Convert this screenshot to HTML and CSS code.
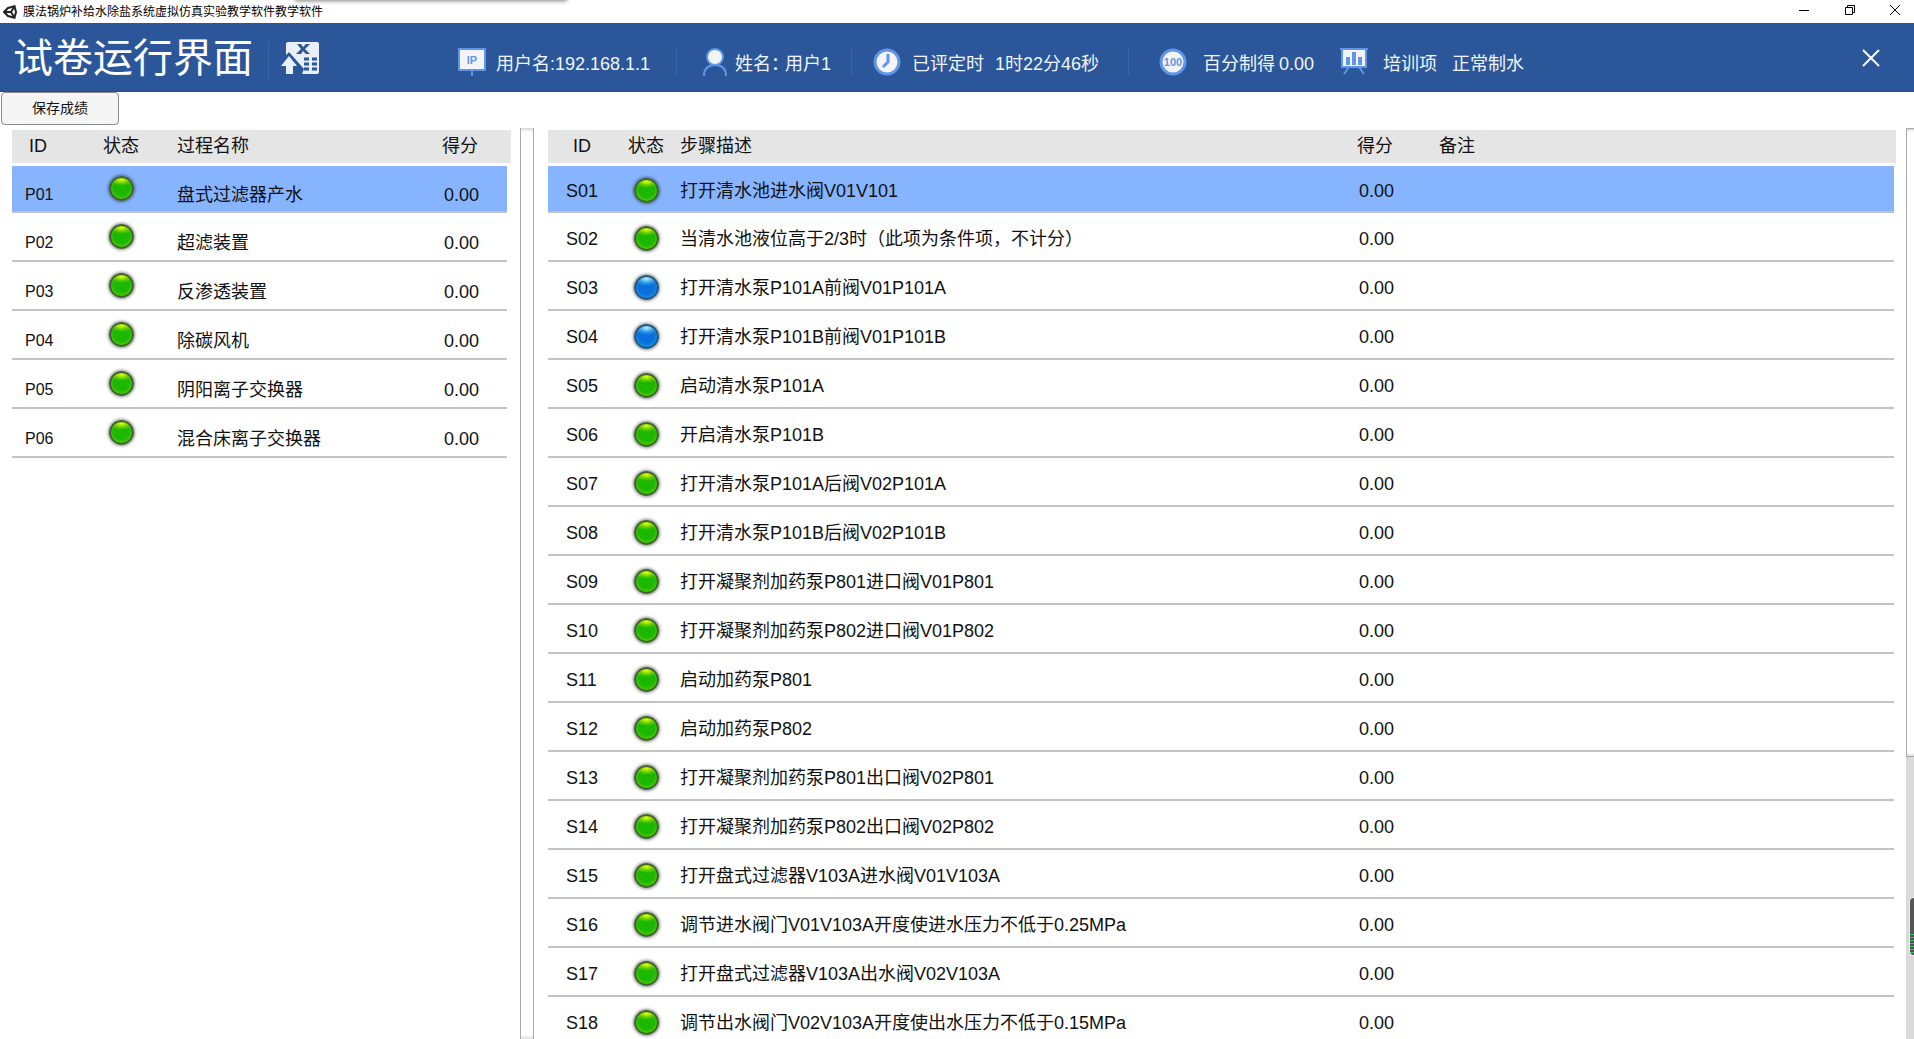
FILE: index.html
```html
<!DOCTYPE html>
<html lang="zh-CN">
<head>
<meta charset="utf-8">
<title>膜法锅炉补给水除盐系统虚拟仿真实验教学软件教学软件</title>
<link rel="stylesheet" href="styles.css">
</head>
<body>
<div class="titlebar">
  <svg class="app-icon" viewBox="0 0 14 14" aria-hidden="true"><path d="M1 7L5 3L11.500 1.200L13 7L11.500 12.800L5 11Z" fill="none" stroke="#222" stroke-width="2"/><path d="M1 7H8M8 7L11.500 1.500M8 7L11.500 12.500" stroke="#222" stroke-width="2" fill="none"/></svg>
  <span class="app-name">膜法锅炉补给水除盐系统虚拟仿真实验教学软件教学软件</span>
  <div class="window-controls">
    <button aria-label="最小化"><svg viewBox="0 0 10 10"><path d="M0 5.500H10"/></svg></button>
    <button aria-label="还原"><svg viewBox="0 0 10 10"><path d="M.5 2.500H7.500V9.500H.5ZM2.500 2.500V.5H9.500V7.500H7.500"/></svg></button>
    <button aria-label="关闭窗口"><svg viewBox="0 0 10 10"><path d="M0 0L10 10M10 0L0 10"/></svg></button>
  </div>
</div>
<header class="header">
  <h1>试卷运行界面</h1>
  <svg class="export" viewBox="0 0 38 32" aria-hidden="true"><path d="M7 0H36Q38 0 38 2V30Q38 32 36 32H21L5 12V2Q5 0 7 0Z" fill="#e9eff7"/><path d="M16 2H20L22 5L25 2H29L24 7L29 12H25L22 9L20 12H15L20 7Z" fill="#2b579a"/><path d="M8 10L23 27L21 32H14V25H0L0 19Z" fill="#2b579a"/><path d="M8 14L16 24H12V32H5V24H0Z" fill="#e9eff7"/><path d="M23 17H28M31 17H36M23 22H28M31 22H36M23 27H28M31 27H36" stroke="#2b579a" stroke-width="3"/></svg>
  <ul class="facts">
    <li class="fact fact-ip"><svg viewBox="0 0 28 28"><path d="M1 1H27V22H1Z" fill="#f4f4f6" stroke="#5f96ea" stroke-width="2"/><path d="M13 22H15V28H13Z" fill="#5f96ea"/><text x="14" y="16" text-anchor="middle">IP</text></svg><span>用户名:192.168.1.1</span></li>
    <li class="fact fact-user"><svg viewBox="0 0 28 28"><path d="M4 28Q4 17 15 17Q26 17 26 28" fill="none" stroke="#5f96ea" stroke-width="2"/><circle cx="15" cy="9" r="8" fill="#f4f4f6" stroke="#5f96ea" stroke-width="2"/></svg><span class="fact-label">姓名：</span><span>用户1</span></li>
    <li class="fact fact-time"><svg viewBox="0 0 28 28"><circle cx="14" cy="14" r="12" fill="#f4f4f6" stroke="#5f96ea" stroke-width="3"/><path d="M15 6V14L10 19" fill="none" stroke="#5f96ea" stroke-width="3"/></svg><span>已评定时</span><span>1时22分46秒</span></li>
    <li class="fact fact-score"><svg viewBox="0 0 28 28"><circle cx="14" cy="14" r="12" fill="#f4f4f6" stroke="#5f96ea" stroke-width="3"/><text x="14" y="18" text-anchor="middle">100</text></svg><span>百分制得</span><span>0.00</span></li>
    <li class="fact fact-item"><svg viewBox="0 0 28 28"><path d="M2 1H26V19H2Z" fill="#f4f4f6"/><path d="M0 1H28M2 1V19H26V1M9 19L4 26M19 19L24 26" fill="none" stroke="#5f96ea" stroke-width="2"/><path d="M6 9H10V17H6ZM12 4H16V17H12ZM18 9H22V17H18Z" fill="#5f96ea"/></svg><span>培训项</span><span>正常制水</span></li>
  </ul>
  <button class="close" aria-label="关闭"><svg viewBox="0 0 18 18"><path d="M1 1L17 17M17 1L1 17"/></svg></button>
</header>
<div class="toolbar"><button class="save">保存成绩</button></div>
<main class="workspace">
  <section class="processes">
    <table>
      <colgroup><col class="c-id"><col class="c-state"><col><col class="c-score"></colgroup>
      <thead><tr><th>ID</th><th>状态</th><th>过程名称</th><th>得分</th></tr></thead>
      <tbody id="process-rows"></tbody>
    </table>
  </section>
  <div class="divider-bar"></div>
  <section class="steps">
    <table>
      <colgroup><col class="c-id"><col class="c-state"><col class="c-desc"><col class="c-score"><col></colgroup>
      <thead><tr><th>ID</th><th>状态</th><th>步骤描述</th><th>得分</th><th>备注</th></tr></thead>
      <tbody id="step-rows"></tbody>
    </table>
  </section>
  <div class="scroll-track"><div class="scroll-thumb"></div><div class="meter"></div></div>
</main>
<script src="script.js"></script>
</body>
</html>
```
FILE: styles.css
```css
* { box-sizing: border-box; }
body {
  margin: 0;
  height: 100vh;
  display: flex;
  flex-direction: column;
  overflow: hidden;
  background: #fff;
  color: #111;
  font: 18px/24px "Liberation Sans", "Noto Sans CJK SC", sans-serif;
}
button { margin: 0; padding: 0; border: 0; background: none; font: inherit; color: inherit; }
svg { display: block; flex: none; }

.titlebar {
  position: relative;
  flex: none;
  height: 23px;
  display: flex;
  align-items: center;
  gap: 6px;
  padding: 0 3px;
  color: #000;
  font-size: 12px;
  line-height: 20px;
}
.titlebar::before {
  content: "";
  position: absolute;
  left: 296px;
  top: -6px;
  width: 270px;
  height: 6px;
  box-shadow: 0 0 4px 1px rgba(0, 0, 0, .5);
}
.app-icon { width: 14px; height: 14px; }
.window-controls { display: flex; height: 100%; margin-left: auto; }
.window-controls button { width: 46px; display: flex; justify-content: center; align-items: center; padding-bottom: 3px; }
.window-controls button:last-child { width: 38px; justify-content: flex-end; padding-right: 11px; }
.window-controls svg { width: 10px; height: 10px; overflow: visible; fill: none; stroke: #000; }

.header {
  flex: none;
  height: 69px;
  display: flex;
  background: #2b579a;
  border-bottom: 1px solid #244c8b;
  color: #f1f5fb;
}
h1 { margin: 0 0 0 13px; width: 256px; padding-top: 6px; border-right: 1px solid #3565aa; border-image: linear-gradient(transparent 18px, #3565aa 18px 56px, transparent 56px) 1; font-size: 40px; line-height: 58px; font-weight: 400; color: #fff; }
.export { width: 38px; height: 32px; margin: 19px 0 0 12px; }
.facts { display: flex; margin: 0; padding: 25px 0 0; list-style: none; }
.fact { display: flex; height: 28px; white-space: nowrap; }
.fact svg { width: 28px; height: 28px; }
.fact span { padding-top: 4px; }
.fact text { fill: #5f96ea; font-weight: 700; font-size: 11px; }
.fact-ip { margin-left: 139px; width: 219px; gap: 10px; }
.fact-user { width: 175px; padding-left: 23px; gap: 7px; }
.fact-label { width: 43px; }
.fact-time { width: 277px; padding-left: 21px; gap: 11px; }
.fact-score { width: 211px; padding-left: 30px; gap: 4px; }
.fact-score svg { margin-right: 12px; }
.fact-item { gap: 15px; }
.fact-ip, .fact-user, .fact-time { border-right: 1px solid #3565aa; }
.close { width: 86px; margin-left: auto; display: flex; justify-content: center; align-items: center; padding-top: 1px; }
.close svg { width: 18px; height: 18px; stroke: #fff; stroke-width: 2; }

.toolbar { flex: none; height: 36px; padding: 0 1px; display: flex; }
.save {
  width: 118px;
  height: 33px;
  padding-bottom: 2px;
  border: 1px solid #8d8d8d;
  border-radius: 4px;
  background: #f5f5f5;
  font-size: 14px;
}

.workspace { flex: 1; min-height: 0; display: flex; }
.processes { width: 520px; padding: 2px 13px 0 12px; }
.steps { flex: 1; padding: 2px 12px 0 14px; }
table { width: 100%; table-layout: fixed; border-collapse: separate; border-spacing: 0; }
th, td { padding: 0; text-align: left; font-weight: 400; white-space: nowrap; }
th { height: 33px; padding-bottom: 2px; background: #e5e5e5; }
th:last-child { box-shadow: 4px 0 #e5e5e5; }
.steps th:last-child { box-shadow: 2px 0 #e5e5e5; }
td { height: 49px; padding-top: 4px; border-bottom: 2px solid #c3c3c3; }
tbody::before { content: ""; display: table-row; height: 3px; }
tbody tr:first-child td { height: 47px; background: #87b4ff; background-clip: padding-box; }
th:nth-child(2), td:nth-child(2) { text-align: center; }

.processes .c-id { width: 74px; }
.processes .c-state { width: 70px; }
.processes td:nth-child(3), .processes th:nth-child(3) { padding-left: 21px; }
.processes .c-score { width: 65px; }
.processes th:first-child { padding-left: 17px; }
.processes td { padding-top: 12px; }
.processes td:first-child { padding-left: 13px; font-size: 16px; }
.processes td:nth-child(2) { padding: 0; }
.processes td:last-child { padding-left: 2px; }

.steps .c-id { width: 64px; }
.steps .c-state { width: 68px; }
.steps .c-desc { width: 677px; }
.steps .c-score { width: 82px; }
.steps td:first-child { padding-left: 18px; }
.steps th:first-child { padding-left: 25px; }
.steps td:nth-child(4) { padding-left: 2px; }

.lamp {
  display: block;
  width: 25px;
  height: 25px;
  margin: 0 auto;
  border: 2px solid #3f6432;
  border-radius: 50%;
  background: radial-gradient(ellipse 60% 30% at 50% 8%, #e8ff00, rgba(150, 225, 0, .5) 60%, transparent), radial-gradient(circle at 50% 45%, #1cb800 50%, #62d400 85%);
  box-shadow: 0 0 3px 1px rgba(0, 0, 0, .45);
}
.lamp.blue {
  border-color: #28577d;
  background: radial-gradient(ellipse 60% 35% at 50% 8%, #b5f2ff, rgba(70, 180, 240, .6) 60%, transparent), radial-gradient(circle at 50% 45%, #0b70dc 50%, #12a0ee 85%);
}

.divider-bar {
  width: 14px;
  border: 1px solid #a9a9a9;
  border-width: 0 1px;
  background: linear-gradient(#d4d4d4, #fff 4px, #fff calc(100% - 4px), #dcdcdc);
}
.scroll-track { position: relative; width: 8px; background: #dadada; }
.scroll-thumb {
  height: 69%;
  border: 1px solid #a9a9a9;
  border-right: 0;
  background: linear-gradient(#d8d8d8, #fff 3px, #fff calc(100% - 3px), #d8d8d8);
}
.meter {
  position: absolute;
  right: 0;
  bottom: 84px;
  width: 4px;
  height: 57px;
  border-radius: 4px 0 0 4px;
  background: linear-gradient(#555 36px, transparent 36px), repeating-linear-gradient(#3fc463 0 1px, #505050 1px 3px);
  box-shadow: 0 0 0 1px #eee;
}
```
FILE: script.js
```js
const processes = ["盘式过滤器产水", "超滤装置", "反渗透装置", "除碳风机", "阴阳离子交换器", "混合床离子交换器"];
const steps = [
  "打开清水池进水阀V01V101",
  "当清水池液位高于2/3时（此项为条件项，不计分）",
  "打开清水泵P101A前阀V01P101A",
  "打开清水泵P101B前阀V01P101B",
  "启动清水泵P101A",
  "开启清水泵P101B",
  "打开清水泵P101A后阀V02P101A",
  "打开清水泵P101B后阀V02P101B",
  "打开凝聚剂加药泵P801进口阀V01P801",
  "打开凝聚剂加药泵P802进口阀V01P802",
  "启动加药泵P801",
  "启动加药泵P802",
  "打开凝聚剂加药泵P801出口阀V02P801",
  "打开凝聚剂加药泵P802出口阀V02P802",
  "打开盘式过滤器V103A进水阀V01V103A",
  "调节进水阀门V01V103A开度使进水压力不低于0.25MPa",
  "打开盘式过滤器V103A出水阀V02V103A",
  "调节出水阀门V02V103A开度使出水压力不低于0.15MPa"
];
const blueSteps = [2, 3];

function row(prefix, index, text, blue, extra) {
  const id = prefix + String(index + 1).padStart(2, "0");
  return `<tr><td>${id}</td><td><span class="lamp${blue ? " blue" : ""}"></span></td><td>${text}</td><td>0.00</td>${extra}</tr>`;
}

document.getElementById("process-rows").innerHTML = processes.map((t, i) => row("P", i, t, false, "")).join("");
document.getElementById("step-rows").innerHTML = steps.map((t, i) => row("S", i, t, blueSteps.includes(i), "<td></td>")).join("");
```
